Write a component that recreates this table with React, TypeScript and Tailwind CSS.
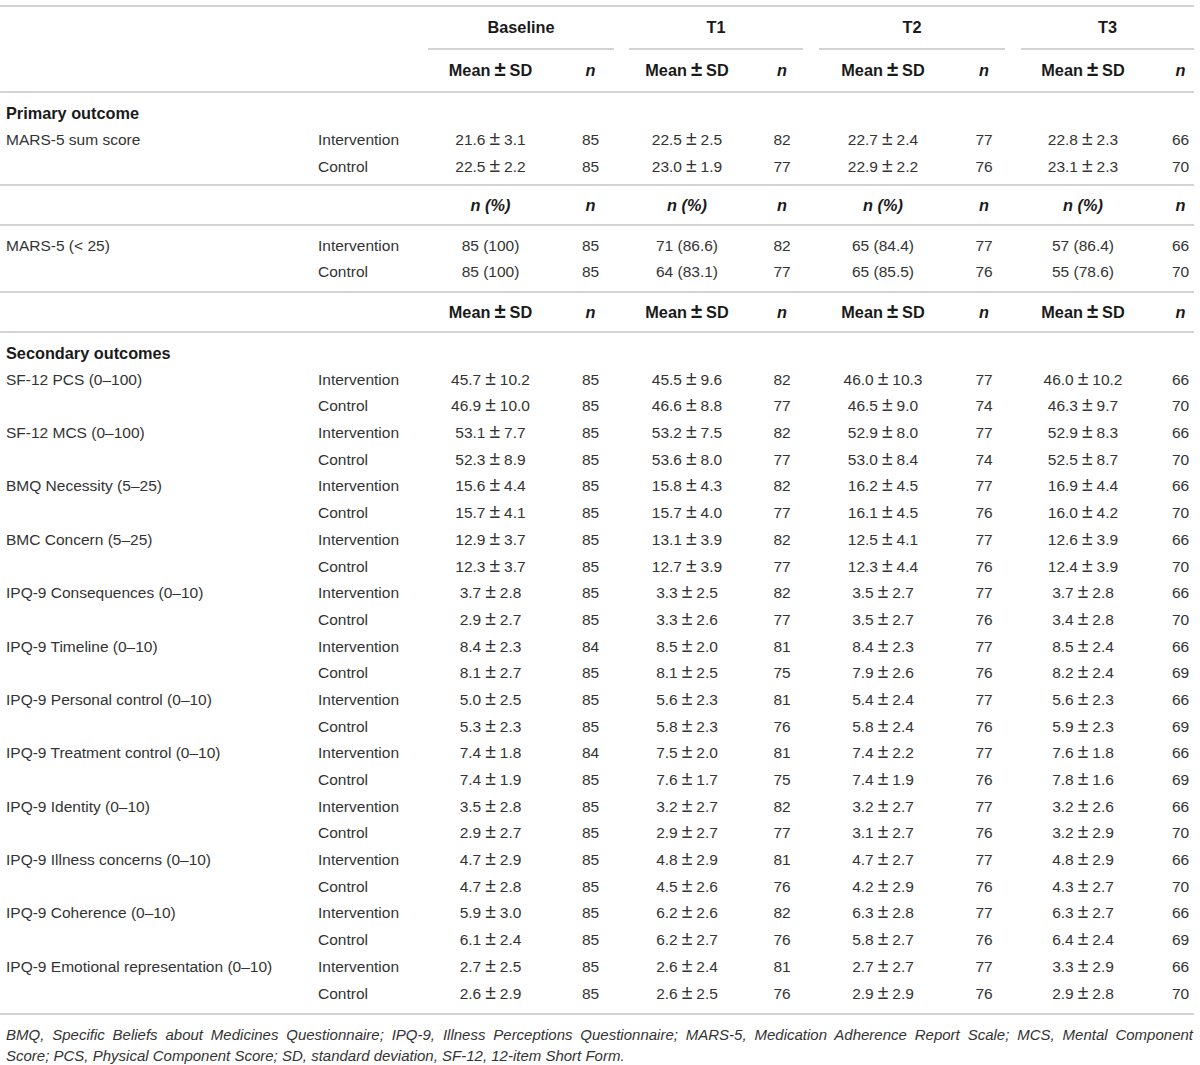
const GROUPS = ['Baseline', 'T1', 'T2', 'T3']

// each row: label, then Intervention values, then Control values (mean, n x4)
type Measure = { label: string; intervention: string[]; control: string[] }

const PRIMARY: Measure[] = [
  {
    label: 'MARS-5 sum score',
    intervention: ['21.6 ± 3.1', '85', '22.5 ± 2.5', '82', '22.7 ± 2.4', '77', '22.8 ± 2.3', '66'],
    control: ['22.5 ± 2.2', '85', '23.0 ± 1.9', '77', '22.9 ± 2.2', '76', '23.1 ± 2.3', '70'],
  },
]

const PERCENT: Measure[] = [
  {
    label: 'MARS-5 (< 25)',
    intervention: ['85 (100)', '85', '71 (86.6)', '82', '65 (84.4)', '77', '57 (86.4)', '66'],
    control: ['85 (100)', '85', '64 (83.1)', '77', '65 (85.5)', '76', '55 (78.6)', '70'],
  },
]

const SECONDARY: Measure[] = [
  {
    label: 'SF-12 PCS (0–100)',
    intervention: ['45.7 ± 10.2', '85', '45.5 ± 9.6', '82', '46.0 ± 10.3', '77', '46.0 ± 10.2', '66'],
    control: ['46.9 ± 10.0', '85', '46.6 ± 8.8', '77', '46.5 ± 9.0', '74', '46.3 ± 9.7', '70'],
  },
  {
    label: 'SF-12 MCS (0–100)',
    intervention: ['53.1 ± 7.7', '85', '53.2 ± 7.5', '82', '52.9 ± 8.0', '77', '52.9 ± 8.3', '66'],
    control: ['52.3 ± 8.9', '85', '53.6 ± 8.0', '77', '53.0 ± 8.4', '74', '52.5 ± 8.7', '70'],
  },
  {
    label: 'BMQ Necessity (5–25)',
    intervention: ['15.6 ± 4.4', '85', '15.8 ± 4.3', '82', '16.2 ± 4.5', '77', '16.9 ± 4.4', '66'],
    control: ['15.7 ± 4.1', '85', '15.7 ± 4.0', '77', '16.1 ± 4.5', '76', '16.0 ± 4.2', '70'],
  },
  {
    label: 'BMC Concern (5–25)',
    intervention: ['12.9 ± 3.7', '85', '13.1 ± 3.9', '82', '12.5 ± 4.1', '77', '12.6 ± 3.9', '66'],
    control: ['12.3 ± 3.7', '85', '12.7 ± 3.9', '77', '12.3 ± 4.4', '76', '12.4 ± 3.9', '70'],
  },
  {
    label: 'IPQ-9 Consequences (0–10)',
    intervention: ['3.7 ± 2.8', '85', '3.3 ± 2.5', '82', '3.5 ± 2.7', '77', '3.7 ± 2.8', '66'],
    control: ['2.9 ± 2.7', '85', '3.3 ± 2.6', '77', '3.5 ± 2.7', '76', '3.4 ± 2.8', '70'],
  },
  {
    label: 'IPQ-9 Timeline (0–10)',
    intervention: ['8.4 ± 2.3', '84', '8.5 ± 2.0', '81', '8.4 ± 2.3', '77', '8.5 ± 2.4', '66'],
    control: ['8.1 ± 2.7', '85', '8.1 ± 2.5', '75', '7.9 ± 2.6', '76', '8.2 ± 2.4', '69'],
  },
  {
    label: 'IPQ-9 Personal control (0–10)',
    intervention: ['5.0 ± 2.5', '85', '5.6 ± 2.3', '81', '5.4 ± 2.4', '77', '5.6 ± 2.3', '66'],
    control: ['5.3 ± 2.3', '85', '5.8 ± 2.3', '76', '5.8 ± 2.4', '76', '5.9 ± 2.3', '69'],
  },
  {
    label: 'IPQ-9 Treatment control (0–10)',
    intervention: ['7.4 ± 1.8', '84', '7.5 ± 2.0', '81', '7.4 ± 2.2', '77', '7.6 ± 1.8', '66'],
    control: ['7.4 ± 1.9', '85', '7.6 ± 1.7', '75', '7.4 ± 1.9', '76', '7.8 ± 1.6', '69'],
  },
  {
    label: 'IPQ-9 Identity (0–10)',
    intervention: ['3.5 ± 2.8', '85', '3.2 ± 2.7', '82', '3.2 ± 2.7', '77', '3.2 ± 2.6', '66'],
    control: ['2.9 ± 2.7', '85', '2.9 ± 2.7', '77', '3.1 ± 2.7', '76', '3.2 ± 2.9', '70'],
  },
  {
    label: 'IPQ-9 Illness concerns (0–10)',
    intervention: ['4.7 ± 2.9', '85', '4.8 ± 2.9', '81', '4.7 ± 2.7', '77', '4.8 ± 2.9', '66'],
    control: ['4.7 ± 2.8', '85', '4.5 ± 2.6', '76', '4.2 ± 2.9', '76', '4.3 ± 2.7', '70'],
  },
  {
    label: 'IPQ-9 Coherence (0–10)',
    intervention: ['5.9 ± 3.0', '85', '6.2 ± 2.6', '82', '6.3 ± 2.8', '77', '6.3 ± 2.7', '66'],
    control: ['6.1 ± 2.4', '85', '6.2 ± 2.7', '76', '5.8 ± 2.7', '76', '6.4 ± 2.4', '69'],
  },
  {
    label: 'IPQ-9 Emotional representation (0–10)',
    intervention: ['2.7 ± 2.5', '85', '2.6 ± 2.4', '81', '2.7 ± 2.7', '77', '3.3 ± 2.9', '66'],
    control: ['2.6 ± 2.9', '85', '2.6 ± 2.5', '76', '2.9 ± 2.9', '76', '2.9 ± 2.8', '70'],
  },
]

// the ± glyph is set larger than the figures in the original typesetting
function PlusMinus({ text }: { text: string }) {
  const parts = text.split(' ± ')
  if (parts.length < 2) return <>{text}</>
  return (
    <>
      {parts[0]}
      <span className="mx-[4px] text-[1.25em] leading-[0]">±</span>
      {parts[1]}
    </>
  )
}

function Rule() {
  return (
    <tr>
      <td colSpan={10} className="p-0">
        <div className="h-[2px] bg-[#d3d3d3]" />
      </td>
    </tr>
  )
}

function Spacer({ h }: { h: string }) {
  return (
    <tr className={h}>
      <td colSpan={10} className="p-0" />
    </tr>
  )
}

function ValueCells({ values }: { values: string[] }) {
  return (
    <>
      {values.map((v, i) => (
        <td key={i} className={`p-0 text-center whitespace-nowrap ${i === 7 ? 'pl-[14px]' : ''}`}>
          <PlusMinus text={v} />
        </td>
      ))}
    </>
  )
}

function MeasureRows({ m }: { m: Measure }) {
  return (
    <>
      <tr className="h-[26.7px]">
        <td className="p-0 pl-[6px] whitespace-nowrap">{m.label}</td>
        <td className="p-0 pl-[6px]">Intervention</td>
        <ValueCells values={m.intervention} />
      </tr>
      <tr className="h-[26.7px]">
        <td className="p-0" />
        <td className="p-0 pl-[6px]">Control</td>
        <ValueCells values={m.control} />
      </tr>
    </>
  )
}

function SubHeader({ label, h }: { label: 'mean' | 'pct'; h: string }) {
  return (
    <tr className={`${h} text-[16.3px] font-bold text-[#1a1a1a]`}>
      <td className="p-0" />
      <td className="p-0" />
      {GROUPS.map((g, i) => (
        <SubHeaderPair key={g} label={label} last={i === 3} />
      ))}
    </tr>
  )
}

function SubHeaderPair({ label, last }: { label: 'mean' | 'pct'; last: boolean }) {
  return (
    <>
      <td className="p-0 text-center whitespace-nowrap">
        {label === 'mean' ? <PlusMinus text="Mean ± SD" /> : <span className="italic">n (%)</span>}
      </td>
      <td className={`p-0 text-center italic ${last ? 'pl-[14px]' : ''}`}>n</td>
    </>
  )
}

function SectionTitle({ children }: { children: string }) {
  return (
    <tr className="h-[26.7px]">
      <td colSpan={10} className="p-0 pl-[6px] text-[16.3px] font-bold text-[#1a1a1a]">
        {children}
      </td>
    </tr>
  )
}

export default function App() {
  return (
    <div className="min-h-screen bg-white pt-[5px] font-['Liberation_Sans',Arial,sans-serif] text-[15.5px] leading-none text-[#333]">
      <table className="w-[1194px] table-fixed border-collapse">
        <colgroup>
          <col className="w-[312px]" />
          <col className="w-[109px]" />
          <col className="w-[139px]" />
          <col className="w-[61px]" />
          <col className="w-[132px]" />
          <col className="w-[58px]" />
          <col className="w-[144px]" />
          <col className="w-[58px]" />
          <col className="w-[140px]" />
          <col className="w-[41px]" />
        </colgroup>
        <thead>
          <Rule />
          <tr className="text-[16.3px] font-bold text-[#1a1a1a]">
            <th colSpan={2} className="p-0" />
            {GROUPS.map((g, i) => (
              <th key={g} colSpan={2} className="p-0 font-bold">
                <div
                  className={`flex h-[43px] items-center justify-center border-b-2 border-[#d3d3d3] ${
                    i === 3 ? 'ml-[8px]' : i === 0 ? 'mx-[7px]' : 'mx-[8px]'
                  }`}
                >
                  {g}
                </div>
              </th>
            ))}
          </tr>
          <SubHeader label="mean" h="h-[41px]" />
          <Rule />
        </thead>
        <tbody>
          <Spacer h="h-[7px]" />
          <SectionTitle>Primary outcome</SectionTitle>
          {PRIMARY.map((m) => (
            <MeasureRows key={m.label} m={m} />
          ))}
          <Spacer h="h-[4px]" />
          <Rule />
          <SubHeader label="pct" h="h-[38px]" />
          <Rule />
          <Spacer h="h-[6px]" />
          {PERCENT.map((m) => (
            <MeasureRows key={m.label} m={m} />
          ))}
          <Spacer h="h-[6px]" />
          <Rule />
          <SubHeader label="mean" h="h-[38px]" />
          <Rule />
          <Spacer h="h-[6px]" />
          <SectionTitle>Secondary outcomes</SectionTitle>
          {SECONDARY.map((m) => (
            <MeasureRows key={m.label} m={m} />
          ))}
          <Spacer h="h-[6px]" />
          <Rule />
        </tbody>
      </table>

      {/* Footnote */}
      <div className="mt-[9px] w-[1193px] pl-[6px] text-[15px] leading-[21px] italic text-[#333]">
        <p className="text-justify [text-align-last:justify]">
          BMQ, Specific Beliefs about Medicines Questionnaire; IPQ-9, Illness Perceptions Questionnaire; MARS-5,
          Medication Adherence Report Scale; MCS, Mental Component
        </p>
        <p>Score; PCS, Physical Component Score; SD, standard deviation, SF-12, 12-item Short Form.</p>
      </div>
    </div>
  )
}
